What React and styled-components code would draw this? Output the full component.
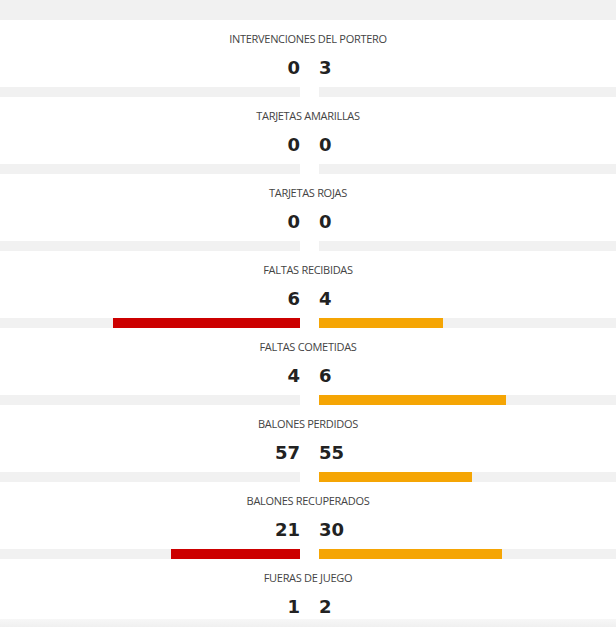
import React from "react";
import styled, { createGlobalStyle } from "styled-components";

const stats = [
  { label: "INTERVENCIONES DEL PORTERO", home: 0, away: 3, hb: 0, ab: 0 },
  { label: "TARJETAS AMARILLAS", home: 0, away: 0, hb: 0, ab: 0 },
  { label: "TARJETAS ROJAS", home: 0, away: 0, hb: 0, ab: 0 },
  { label: "FALTAS RECIBIDAS", home: 6, away: 4, hb: 187 / 300, ab: 124 / 297 },
  { label: "FALTAS COMETIDAS", home: 4, away: 6, hb: 0, ab: 187 / 297 },
  { label: "BALONES PERDIDOS", home: 57, away: 55, hb: 0, ab: 153 / 297 },
  { label: "BALONES RECUPERADOS", home: 21, away: 30, hb: 129 / 300, ab: 183 / 297 },
  { label: "FUERAS DE JUEGO", home: 1, away: 2, hb: 0, ab: 0, last: true },
];

const GlobalStyle = createGlobalStyle`
  body {
    margin: 0;
    background: #ffffff;
    font-family: "Open Sans", "Liberation Sans", sans-serif;
  }
`;

const App = () => {
  return (
    <>
      <GlobalStyle />
      <Page>
        <TopBand />
        {stats.map((s) => (
          <StatRow key={s.label}>
            <Label>{s.label}</Label>
            <Split>
              <Value side="home">{s.home}</Value>
              <Value side="away">{s.away}</Value>
            </Split>
            {!s.last && (
              <Split $bars>
                <Track side="home">
                  <Fill side="home" style={{ width: `${s.hb * 100}%` }} />
                </Track>
                <Track side="away">
                  <Fill side="away" style={{ width: `${s.ab * 100}%` }} />
                </Track>
              </Split>
            )}
          </StatRow>
        ))}
        <BottomBand />
      </Page>
    </>
  );
};

export default App;

const Page = styled.div`
  width: 616px;
  height: 627px;
  overflow: hidden;
  background: #fff;
`;

const TopBand = styled.div`
  height: 20px;
  background: #f1f1f1;
`;

const StatRow = styled.div`
  padding-top: 12px;
`;

const Label = styled.div`
  text-align: center;
  font-size: 11px;
  line-height: 14px;
  color: #444;
  letter-spacing: -0.3px;
`;

const Split = styled.div`
  display: grid;
  grid-template-columns: 300px 1fr;
  column-gap: 19px;
  margin-top: ${(p) => (p.$bars ? "7px" : "10px")};
`;

const Value = styled.div`
  font-family: "DejaVu Sans", "Open Sans", sans-serif;
  font-weight: 700;
  font-size: 18px;
  line-height: 24px;
  color: #222;
  text-align: ${(p) => (p.side === "home" ? "right" : "left")};
`;

const Track = styled.div`
  height: 10px;
  background: #f1f1f1;
  display: flex;
  justify-content: ${(p) => (p.side === "home" ? "flex-end" : "flex-start")};
`;

const Fill = styled.div`
  height: 100%;
  background: ${(p) => (p.side === "home" ? "#cc0000" : "#f5a504")};
`;

const BottomBand = styled.div`
  height: 12px;
  background: linear-gradient(#f7f7f7, #ececec);
`;
